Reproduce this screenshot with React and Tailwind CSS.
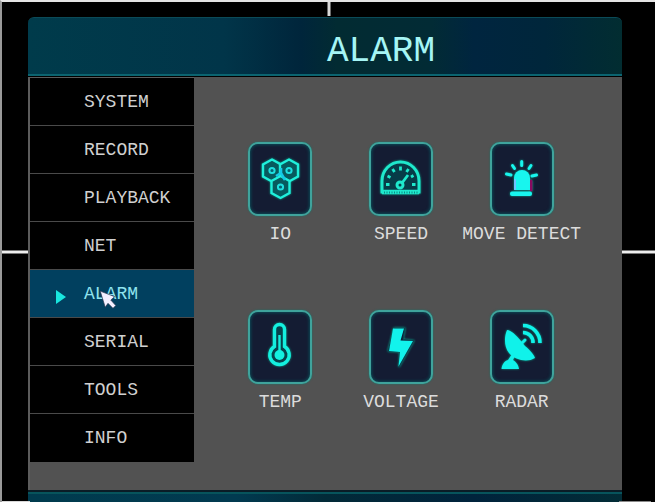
import React from "react";

const MENU = ["SYSTEM", "RECORD", "PLAYBACK", "NET", "ALARM", "SERIAL", "TOOLS", "INFO"];

function IoIcon() {
  const hex = (x, y) =>
    `M${x} ${y - 11} L${x + 9} ${y - 6} V${y + 6} L${x} ${y + 11} L${x - 9} ${y + 6} V${y - 6} Z`;
  return (
    <g fill="#075a5e" stroke="#1ff0dc" strokeWidth="2.4">
      <path d={hex(24, 28.5)} />
      <path d={hex(41, 28.5)} />
      <path d={hex(32.5, 45)} />
      <path d="M28 34 L33 31 L37 38 M33 26 V31" stroke="#15c9e6" strokeWidth="2.6" fill="none" />
      <g strokeWidth="2" fill="#07606e" stroke="#1fdfdf">
        <circle cx="24" cy="28.5" r="2.6" />
        <circle cx="41" cy="28.5" r="2.6" />
        <circle cx="32.5" cy="45" r="2.6" />
      </g>
    </g>
  );
}

function SpeedIcon() {
  return (
    <g fill="none" stroke="#1fe8cc">
      <path d="M13 50 V39 A18.5 19 0 0 1 50 39 V50 Z" fill="#073c48" strokeWidth="3" />
      <path d="M13 50 H50" strokeWidth="4.5" />
      <path d="M15 50.5 H49" stroke="#0a8c86" strokeWidth="2" strokeDasharray="1 1.5" />
      <path
        d="M17 42.5 H20.5 M43 42.5 H46.5 M18.5 34 L21.5 35.5 M23.5 27 L25.5 30 M31.5 24.5 V28.5 M39.5 27 L37.5 30 M44.5 33.5 L42 35"
        strokeWidth="2.8"
      />
      <circle cx="31" cy="43" r="3" strokeWidth="3" />
      <path d="M33 41 L39 33" strokeWidth="2.8" />
    </g>
  );
}

function SirenIcon() {
  return (
    <g fill="#18f5ee" stroke="#18f5ee" strokeLinecap="round">
      <path d="M41 39 V48" stroke="#8a0a60" strokeWidth="3" />
      <path d="M24 48 V36 A8 8 0 0 1 40 36 V48 Z" stroke="none" />
      <path d="M25 38 V47" stroke="#74bfff" strokeWidth="2" />
      <rect x="20" y="49.5" width="22" height="4.5" rx="2" stroke="none" />
      <path
        d="M31.7 19.5 V23.5 M22.5 23.5 L24.5 26.5 M41 23.5 L39 26.5 M16.5 32 L21 33 M46.5 33 L42 34"
        strokeWidth="3"
      />
    </g>
  );
}

function TempIcon() {
  return (
    <g stroke="#14efdf" fill="none">
      <path
        d="M26.5 36.5 V19.5 A5 5 0 0 1 36.5 19.5 V36.5 A9.7 9.7 0 1 1 26.5 36.5 Z"
        fill="#07424c"
        strokeWidth="3.4"
      />
      <path d="M31.5 25 V44" strokeWidth="2.4" />
      <circle cx="31.5" cy="45" r="5" fill="#14efdf" stroke="none" />
    </g>
  );
}

function VoltageIcon() {
  return (
    <g>
      <path d="M25 18 L36 18 L34 29.5 L45 30.5 L30 57 L31 42 L19 41 Z" fill="#0a2038" stroke="#0c4450" />
      <path d="M24 18.5 H35 L31.5 30.5 L44 31 L29.5 56.5 L31 42 L20 41 Z" fill="#12f3ec" />
    </g>
  );
}

function RadarIcon() {
  return (
    <g fill="#10f2ea" stroke="#10f2ea">
      <path d="M17 20 C21 20 26 25 31 31 L35 36 C41 41 44 45 45 48 C37 53 25 50 19 43 C14 37 14 27 17 20 Z" stroke="none" />
      <path d="M31 34 L35 30" strokeWidth="3" strokeLinecap="round" />
      <path d="M22 44 L18 50 C14 51 12 55 11.5 59 H29 C28 54 26 52 23 50 L25 46 Z" stroke="none" />
      <path d="M33 15.5 A17 17 0 0 1 50 33 M33 22.5 A10 10 0 0 1 43 33" fill="none" strokeWidth="3.6" />
    </g>
  );
}

const TILES = [
  { label: "IO", Icon: IoIcon },
  { label: "SPEED", Icon: SpeedIcon },
  { label: "MOVE DETECT", Icon: SirenIcon },
  { label: "TEMP", Icon: TempIcon },
  { label: "VOLTAGE", Icon: VoltageIcon },
  { label: "RADAR", Icon: RadarIcon },
];

function Tile({ label, Icon }) {
  return (
    <button type="button" className="flex flex-col items-center gap-1">
      <span className="h-[74px] w-16 rounded-[10px] border-2 border-[#3fa39c] bg-[#141c33] shadow-[inset_0_0_3px_1px_#0b4a55,0_0_2px_#16756a]">
        <svg
          viewBox="2 2 60 70"
          className="h-full w-full drop-shadow-[0_0_1px_#0aa88c]"
          aria-hidden="true"
        >
          <Icon />
        </svg>
      </span>
      <span className="text-lg leading-7 whitespace-nowrap text-[#dcdcdc]">{label}</span>
    </button>
  );
}

function Menu() {
  return (
    <nav className="w-[166px] shrink-0 border-l-2 border-t border-[#5c5c5c]">
      <ul className="bg-black">
        {MENU.map((name) => {
          const active = name === "ALARM";
          return (
            <li key={name} className="h-12 border-b border-[#4a4a4a] last:border-b-0">
              <button
                type="button"
                aria-current={active ? "page" : undefined}
                className={
                  active
                    ? "relative flex h-full w-full items-center bg-[#01405f] pl-[54px] text-lg text-[#8fe3ee]"
                    : "flex h-full w-full items-center pl-[54px] text-lg text-[#d0d0d0]"
                }
              >
                {name}
                {active && (
                  <>
                    <svg viewBox="0 0 12 14" className="absolute top-5 left-[25px] h-3.5 w-3" aria-hidden="true">
                      <path d="M1 0 L11 7 L1 14 Z" fill="#19e6df" />
                    </svg>
                    <svg viewBox="0 0 16 18" className="absolute top-5 left-[69px] h-5 w-[18px]" aria-hidden="true">
                      <path
                        d="M1 1 L14 6 L10.5 9 L15 14 L12.5 16.5 L8 12 L5.5 15.5 Z"
                        fill="#f4f0ff"
                        stroke="#28324c"
                        strokeWidth="0.6"
                      />
                    </svg>
                  </>
                )}
              </button>
            </li>
          );
        })}
      </ul>
    </nav>
  );
}

export default function App() {
  return (
    <div className="relative flex min-h-screen flex-col border-t-2 border-l-2 border-t-[#e4e4e4] border-l-[#9a9a9a] bg-black pt-[15px] pr-[33px] pl-[26px] font-['Liberation_Mono',monospace]">
      <span className="absolute top-0 left-1/2 h-3.5 w-[3px] -translate-x-1/2 bg-[#d8d8d8]" />
      <span className="absolute top-1/2 left-0 h-[3px] w-[26px] -translate-y-1/2 bg-[#eeeeee]" />
      <span className="absolute top-1/2 right-0 h-[3px] w-[33px] -translate-y-1/2 bg-[#eeeeee]" />
      <span className="absolute bottom-0 left-0 h-px w-7 bg-[#d8d8d8]" />
      <span className="absolute right-1 bottom-0 h-px w-8 bg-[#8a8a8a]" />

      <header className="h-[60px] rounded-t-md bg-black pb-px">
        <div className="flex h-full items-center justify-center rounded-t-md border-t border-b-2 border-t-[#0b4b58] border-b-[#0b6470] bg-[linear-gradient(90deg,#003b4b_0%,#013549_33%,#00253b_46%,#022b32_52%,#022b35_68%,#00253f_75%,#00263b_87%,#022d31_100%)] pl-28 pt-3">
          <h1 className="text-4xl leading-none text-[#a5f5f5]">ALARM</h1>
        </div>
      </header>

      <div className="flex flex-1 bg-[#525252]">
        <Menu />
        <main className="grid flex-1 grid-cols-3 content-start gap-y-[62px] pt-[65px] pr-10 pb-[70px] pl-[26px]">
          {TILES.map((tile) => (
            <Tile key={tile.label} {...tile} />
          ))}
        </main>
      </div>

      <footer className="h-3 border-t-2 border-[#0a1c26] bg-[linear-gradient(90deg,#003b4e_0%,#013a50_35%,#022a38_50%,#00233c_75%,#022c36_100%)]">
        <div className="h-0.5 bg-[#07545c]" />
      </footer>
    </div>
  );
}
